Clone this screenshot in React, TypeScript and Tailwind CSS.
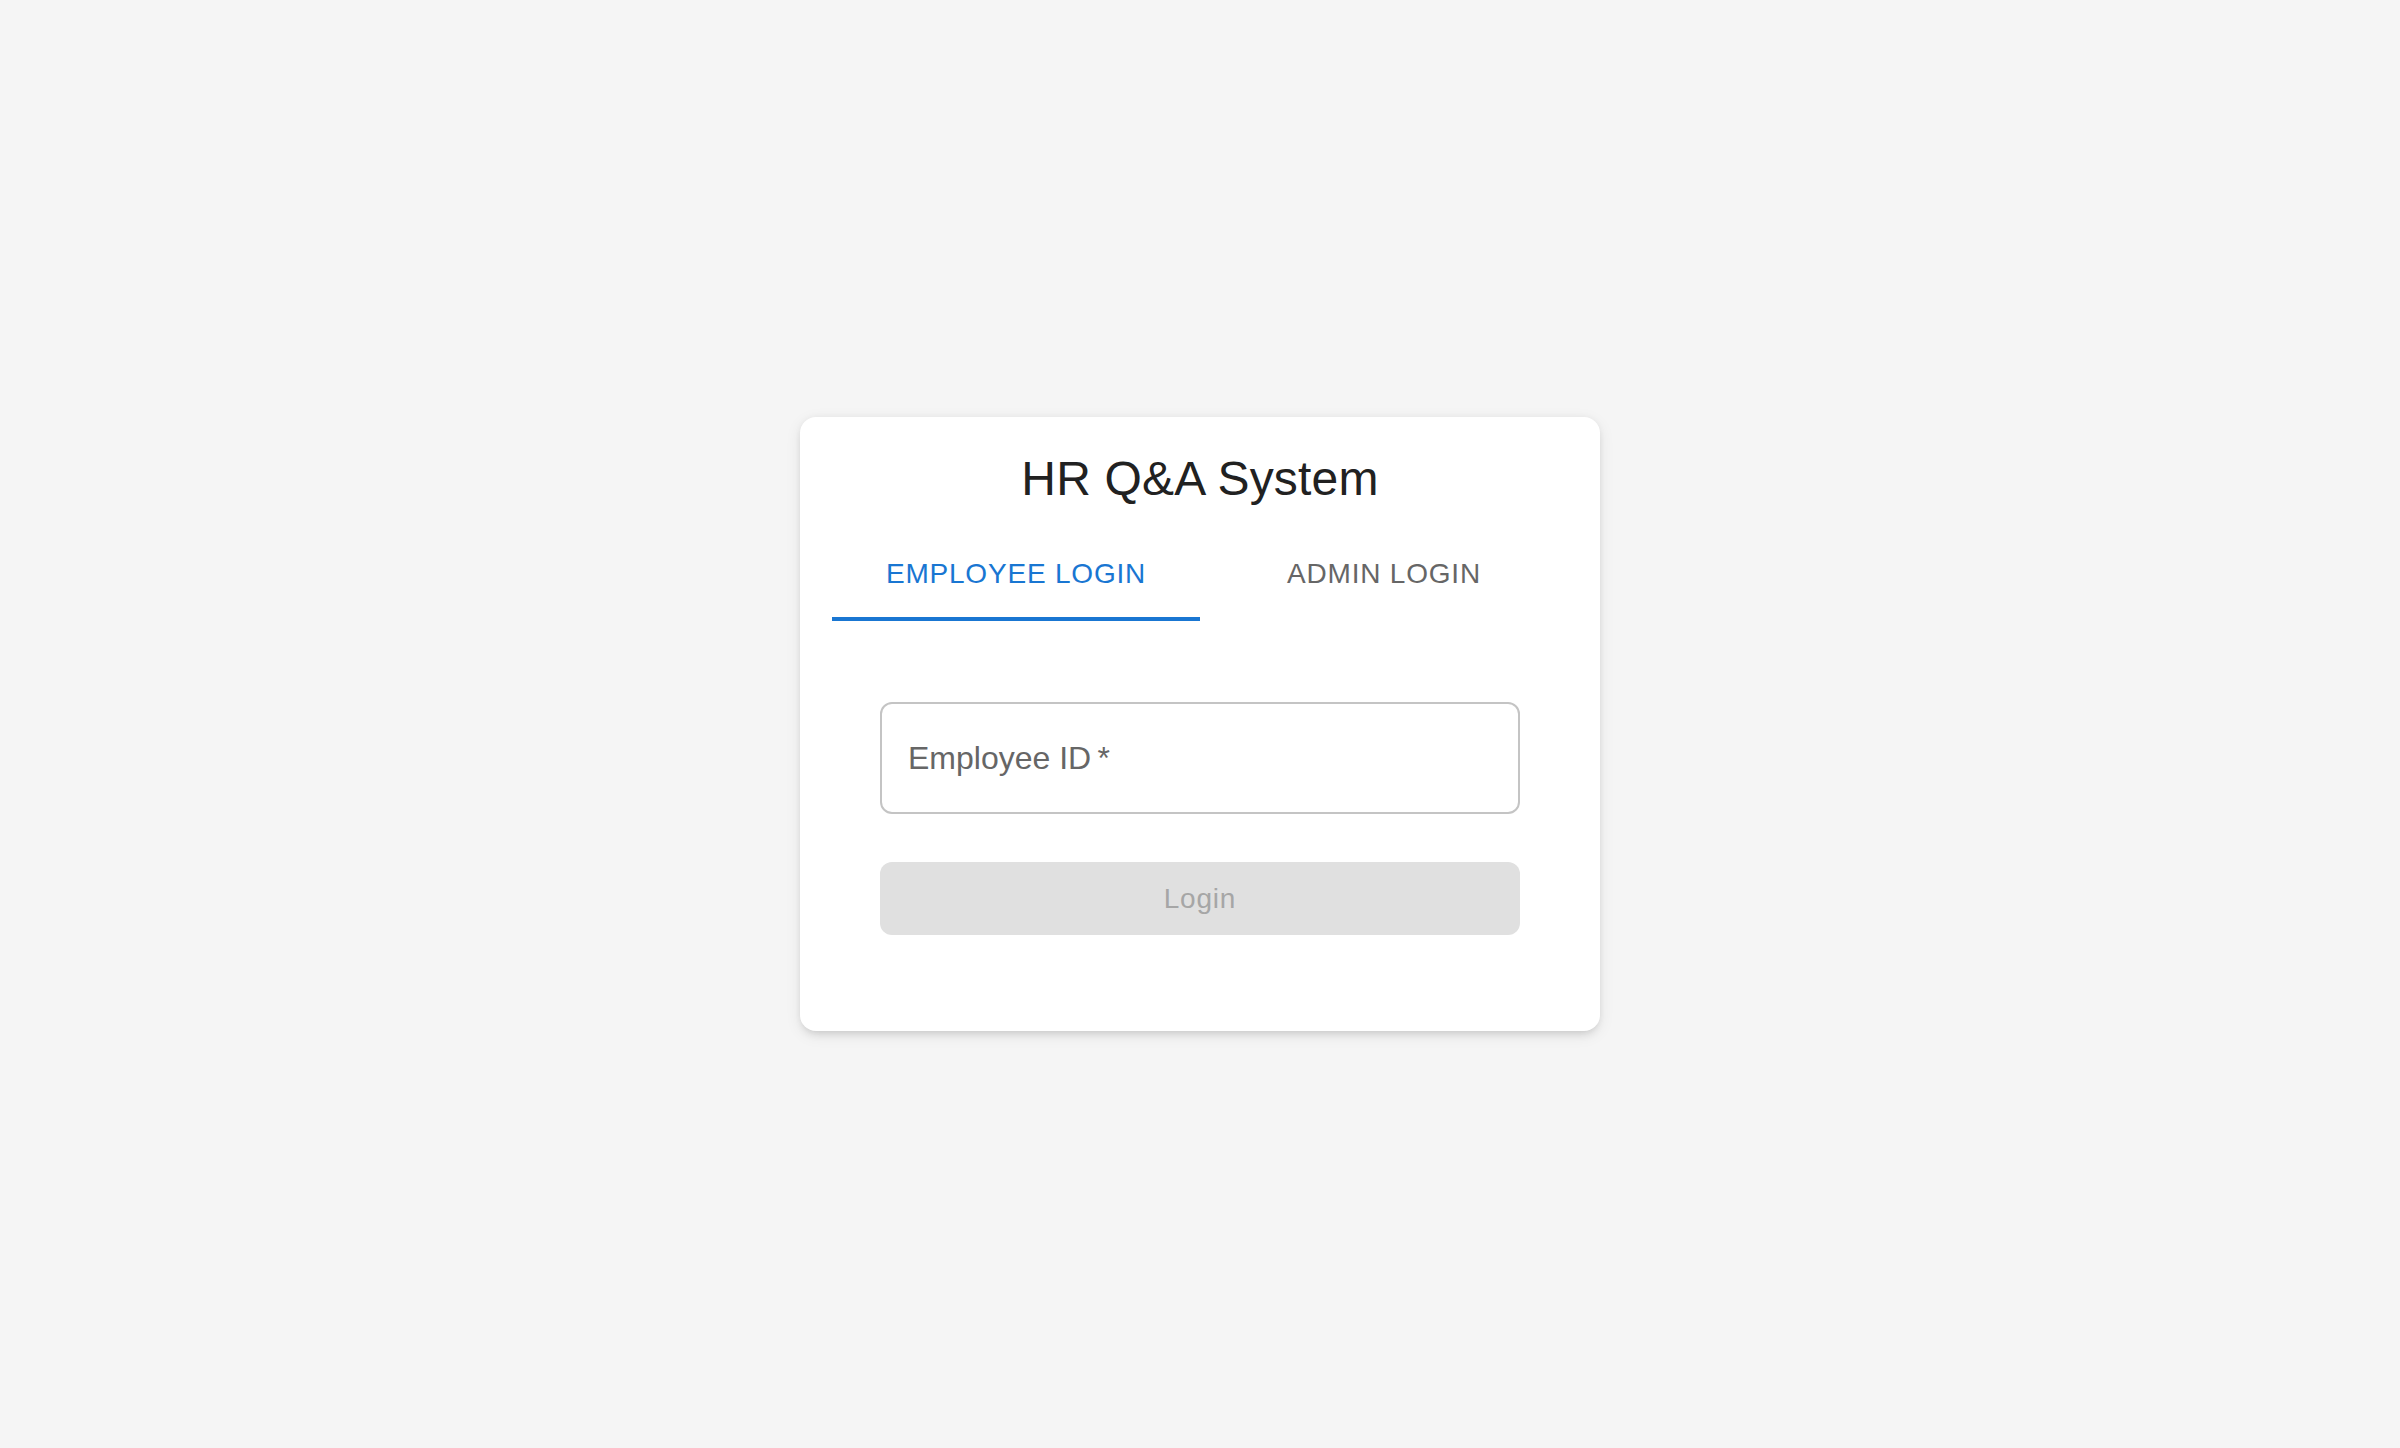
import { useState } from 'react'

const font = { fontFamily: '"Liberation Sans", Arial, sans-serif' }

function Tab({ label, active, onClick }: { label: string; active: boolean; onClick: () => void }) {
  return (
    <button
      onClick={onClick}
      className={
        'relative flex h-[96px] flex-1 items-center justify-center text-[28px] uppercase leading-[35px] tracking-[0.8px] ' +
        (active ? 'text-[#1976d2]' : 'text-[#666666]')
      }
    >
      {label}
      {active && <span className="absolute bottom-0 left-0 h-[4px] w-full bg-[#1976d2]" />}
    </button>
  )
}

export default function App() {
  const [tab, setTab] = useState<'employee' | 'admin'>('employee')

  return (
    <div className="flex min-h-screen items-center justify-center bg-[#f5f5f5]" style={font}>
      <div className="w-[800px] rounded-[16px] bg-white p-[32px] shadow-[0_6px_10px_-4px_rgba(0,0,0,0.12),0_4px_16px_rgba(0,0,0,0.08),0_0_6px_rgba(0,0,0,0.04)]">
        <h1 className="text-center text-[48px] leading-[60px] tracking-[0.2px] text-[#212121]">HR Q&amp;A System</h1>

        <div className="mt-[16px] flex">
          <Tab label="Employee Login" active={tab === 'employee'} onClick={() => setTab('employee')} />
          <Tab label="Admin Login" active={tab === 'admin'} onClick={() => setTab('admin')} />
        </div>

        <div className="px-[48px] pb-[64px] pt-[81px]">
          <div className="flex h-[112px] items-center rounded-[12px] border-2 border-[#c4c4c4] px-[26px]">
            <span className="text-[32px] text-[#666666]">
              {tab === 'employee' ? 'Employee ID' : 'Admin ID'}
              {'\u2009*'}
            </span>
          </div>

          <button
            disabled
            className="mt-[48px] flex h-[73px] w-full items-center justify-center rounded-[12px] bg-[#e0e0e0] text-[28px] tracking-[0.8px] text-[#a6a6a6]"
          >
            Login
          </button>
        </div>
      </div>
    </div>
  )
}
